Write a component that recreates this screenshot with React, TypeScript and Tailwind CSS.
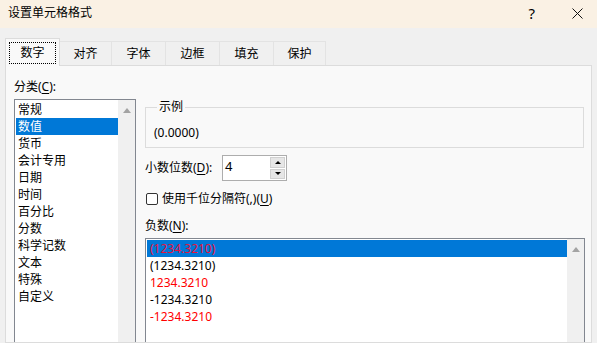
import type { ReactNode } from 'react';

const categories = ['常规', '数值', '货币', '会计专用', '日期', '时间', '百分比', '分数', '科学记数', '文本', '特殊', '自定义'];

const negatives = [
  { text: '(1234.3210)', red: true },
  { text: '(1234.3210)', red: false },
  { text: '1234.3210', red: true },
  { text: '-1234.3210', red: false },
  { text: '-1234.3210', red: true },
];

const tabs = [
  { label: '对齐', w: 'w-[52px]' },
  { label: '字体', w: 'w-[54px]' },
  { label: '边框', w: 'w-[54px]' },
  { label: '填充', w: 'w-[54px]' },
  { label: '保护', w: 'w-[52px]' },
];

function U({ children }: { children: ReactNode }) {
  return <span className="underline underline-offset-2">{children}</span>;
}

function ScrollBar() {
  return (
    <div className="w-[17px] shrink-0 bg-[#f0f0f0] flex flex-col items-center pt-[8px]">
      <div className="w-0 h-0 border-l-[4px] border-r-[4px] border-b-[5px] border-l-transparent border-r-transparent border-b-[#a3a3a3]" />
    </div>
  );
}

export default function App() {
  return (
    <div
      className="w-[597px] h-[343px] overflow-hidden bg-[#f0f0f0] flex flex-col text-[12px] text-black"
      style={{ fontFamily: '"Noto Sans", "Noto Sans CJK SC", sans-serif' }}
    >
      {/* title bar */}
      <div className="h-[28px] shrink-0 bg-[#faf1e4] flex items-center pl-[8px] pr-[14px] pb-[2px]">
        <div className="flex-1 leading-[16px]">设置单元格格式</div>
        <div className="text-[15px] leading-[16px] mr-[37px]">?</div>
        <svg width="11" height="11" viewBox="0 0 11 11">
          <path d="M0.5 0.5 L10.5 10.5 M10.5 0.5 L0.5 10.5" stroke="#111" strokeWidth="1" fill="none" />
        </svg>
      </div>

      {/* tabs */}
      <div className="shrink-0 flex items-end pl-[5px] pt-[10px] relative z-10">
        <div className="w-[55px] h-[28px] -mb-px bg-[#f9f9f9] border-l border-t border-r border-[#dcdcdc] flex pt-[3px] px-[3px] pb-[2px]">
          <div className="flex-1 border border-dotted border-black flex items-center justify-center leading-[16px]">数字</div>
        </div>
        {tabs.map((t) => (
          <div key={t.label} className={`${t.w} h-[24px] border-t border-r border-[#e3e3e3] flex items-center justify-center leading-[16px]`}>
            {t.label}
          </div>
        ))}
      </div>

      {/* panel */}
      <div className="flex-1 min-h-0 overflow-hidden mx-[5px] bg-[#f9f9f9] border border-[#dcdcdc] flex pl-[8px] pt-[13px]">
        {/* category column */}
        <div className="w-[122px] shrink-0 flex flex-col">
          <div className="h-[16px] leading-[16px]">
            分类(<U>C</U>):
          </div>
          <div className="mt-[4px] h-[300px] shrink-0 border border-[#828790] bg-white flex">
            <div className="flex-1 pt-[1px] pl-[1px]">
              {categories.map((c, i) => (
                <div key={c} className={`h-[17px] leading-[17px] pl-[2px] ${i === 1 ? 'bg-[#0078d7] text-white' : ''}`}>
                  {c}
                </div>
              ))}
            </div>
            <ScrollBar />
          </div>
        </div>

        {/* right column */}
        <div className="ml-[9px] w-[440px] shrink-0 flex flex-col">
          <fieldset className="mt-[20px] w-[439px] border border-[#dcdcdc] pl-[8px] pb-[6px]">
            <legend className="ml-[3px] px-[2px] leading-[16px]">示例</legend>
            <div className="pt-[10px] leading-[16px]">(0.0000)</div>
          </fieldset>

          <div className="mt-[7px] flex items-center h-[26px] shrink-0">
            <div className="w-[77px] leading-[16px]">
              小数位数(<U>D</U>):
            </div>
            <div className="w-[65px] h-[26px] border border-[#adadad] bg-white flex">
              <div className="flex-1 pl-[2px] pt-[2px] leading-[16px] text-[13px]">4</div>
              <div className="w-[15px] mr-[1px] py-[1px] flex flex-col gap-[1px]">
                <div className="h-[12px] bg-[#e6e6e6] border border-[#d0d0d0] flex items-center justify-center">
                  <div className="w-0 h-0 border-l-[3px] border-r-[3px] border-b-[3px] border-l-transparent border-r-transparent border-b-black" />
                </div>
                <div className="h-[11px] bg-[#e6e6e6] border border-[#d0d0d0] flex items-center justify-center">
                  <div className="w-0 h-0 border-l-[3px] border-r-[3px] border-t-[3px] border-l-transparent border-r-transparent border-t-black" />
                </div>
              </div>
            </div>
          </div>

          <div className="mt-[12px] h-[12px] shrink-0 flex items-center">
            <div className="ml-[1px] w-[12px] h-[12px] border border-[#333] rounded-[2px] bg-white" />
            <div className="ml-[4px] leading-[16px]">
              使用千位分隔符(,)(<U>U</U>)
            </div>
          </div>

          <div className="mt-[13px] h-[16px] shrink-0 leading-[16px]">
            负数(<U>N</U>):
          </div>

          <div className="mt-[4px] h-[200px] shrink-0 w-[440px] border border-[#828790] bg-white flex">
            <div className="flex-1 pt-[1px] pl-[1px]">
              {negatives.map((n, i) => (
                <div
                  key={i}
                  className={`h-[17px] leading-[17px] pl-[3px] ${i === 0 ? 'bg-[#0078d7]' : ''} ${
                    n.red ? (i === 0 ? 'text-[#e8123c]' : 'text-[#ff0000]') : ''
                  }`}
                >
                  {n.text}
                </div>
              ))}
            </div>
            <ScrollBar />
          </div>
        </div>
      </div>
    </div>
  );
}
